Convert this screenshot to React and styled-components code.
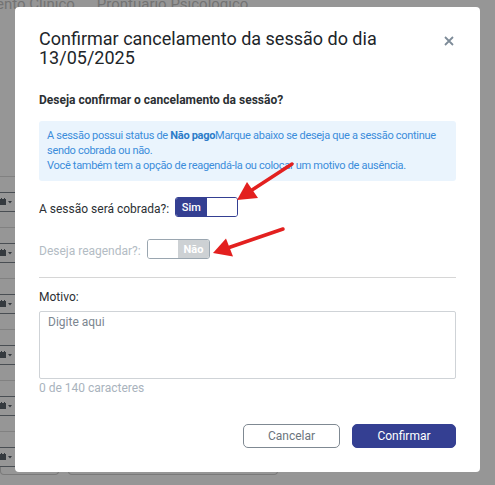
import React, { useState } from "react";
import styled, { createGlobalStyle } from "styled-components";

const Global = createGlobalStyle`
  html, body { margin: 0; padding: 0; }
  body {
    width: 495px;
    height: 485px;
    overflow: hidden;
    background: #ffffff;
    font-family: Roboto, "Liberation Sans", sans-serif;
  }
  * { box-sizing: border-box; }
`;

// ---- page behind the modal ----
const Page = styled.div`
  position: relative;
  width: 495px;
  height: 485px;
  overflow: hidden;
`;

const Tabs = styled.div`
  display: flex;
  gap: 22px;
  height: 13px;
  margin-top: -5px;
  margin-left: -60px;
  font-size: 15px;
  line-height: 18px;
  color: #c4c4c4;
  white-space: nowrap;
`;

const Rows = styled.div`
  margin-top: 168px;
  margin-left: -40px;
  width: 60px;
`;

const Row = styled.div`
  height: ${(p) => (p.last ? 36 : 51)}px;
  display: flex;
  flex-direction: column;
  justify-content: ${(p) => (p.last ? "flex-end" : "center")};
  border-top: 1px solid #dcdcdc;
`;

const Control = styled.div`
  height: 20px;
  border-top: 1px solid #7d858d;
  border-bottom: 1px solid #7d858d;
  display: flex;
  align-items: center;
  padding-left: 40px;
  color: #717a83;
`;

const Footer = styled.div`
  display: flex;
  gap: 9px;
`;

const FooterBox = styled.div`
  height: 8px;
  width: ${(p) => p.w}px;
  border: 1px solid #cfcfcf;
  border-top: none;
  border-radius: 0 0 4px 4px;
`;

// ---- overlay + modal ----
const Backdrop = styled.div`
  position: absolute;
  inset: 0;
  background: rgba(0, 0, 0, 0.41);
`;

const Modal = styled.div`
  position: absolute;
  left: 15px;
  top: 7px;
  width: 465px;
  height: 465px;
  background: #fff;
  border-radius: 4px;
  padding: 22px 24px 24px;
  display: flex;
  flex-direction: column;
`;

const Header = styled.div`
  display: flex;
  justify-content: space-between;
  align-items: flex-start;
`;

const Title = styled.h2`
  margin: 0;
  font-size: 18px;
  font-weight: 400;
  line-height: 19px;
  color: #212529;
  width: 360px;
`;

const Close = styled.button`
  border: none;
  background: none;
  padding: 0;
  margin: 7px 2px 0 0;
  width: 10px;
  height: 10px;
  display: flex;
  cursor: pointer;
`;

const Question = styled.p`
  margin: 26px 0 0;
  font-size: 12px;
  line-height: 14px;
  font-weight: 700;
  color: #2b2f33;
`;

const Info = styled.div`
  margin-top: 14px;
  background: #eaf4fd;
  border-radius: 3px;
  padding: 7px 3px 8px 8px;
  font-size: 11px;
  line-height: 15px;
  letter-spacing: -0.3px;
  color: #3b8ddb;
  b { font-weight: 700; color: #2c7cc9; }
`;

const ToggleRow = styled.div`
  display: flex;
  align-items: flex-end;
  gap: 6px;
  margin-top: ${(p) => p.mt}px;
`;

const Label = styled.span`
  font-size: 12px;
  line-height: 15px;
  color: ${(p) => (p.muted ? "#b3bcc4" : "#2b2f33")};
`;

const Toggle = styled.div`
  display: flex;
  width: 63px;
  height: 20px;
  border: 1px solid ${(p) => (p.on ? "#343f92" : "#9aa6b0")};
  border-radius: 3px;
  overflow: hidden;
  cursor: pointer;
`;

const Segment = styled.span`
  flex: 1;
  display: flex;
  align-items: center;
  justify-content: center;
  font-size: 11px;
  font-weight: ${(p) => (p.on ? 500 : 700)};
  color: #fff;
  background: ${(p) => p.bg || "#fff"};
`;

const Divider = styled.hr`
  border: none;
  border-top: 1px solid #d6d6d6;
  margin: 18px 0 0;
`;

const FieldLabel = styled.label`
  margin-top: 12px;
  font-size: 12px;
  line-height: 15px;
  color: #2b2f33;
`;

const TextArea = styled.textarea`
  margin-top: 6px;
  height: 68px;
  width: 100%;
  resize: none;
  border: 1px solid #cfd3d7;
  border-radius: 2px;
  padding: 3px 8px;
  font-family: Roboto, "Liberation Sans", sans-serif;
  font-size: 12px;
  line-height: 15px;
  outline: none;
  &::placeholder { color: #7c8690; }
`;

const Counter = styled.span`
  margin-top: 2px;
  font-size: 12px;
  line-height: 14px;
  color: #a9b3bd;
`;

const Actions = styled.div`
  margin-top: auto;
  display: flex;
  justify-content: flex-end;
  gap: 12px;
`;

const Button = styled.button`
  height: 24px;
  width: ${(p) => p.w}px;
  border-radius: 5px;
  font-family: Roboto, "Liberation Sans", sans-serif;
  font-size: 12px;
  cursor: pointer;
  border: 1px solid ${(p) => (p.primary ? "#343f92" : "#7f8992")};
  background: ${(p) => (p.primary ? "#343f92" : "#fff")};
  color: ${(p) => (p.primary ? "#fff" : "#6c757d")};
`;

const Arrows = styled.svg`
  position: absolute;
  left: 0;
  top: 0;
  pointer-events: none;
`;

function CalendarIcon() {
  return (
    <svg width="13" height="8" viewBox="0 0 13 8">
      <rect x="0" y="1" width="6" height="6" fill="#5a636c" />
      <rect x="1" y="0" width="1" height="2" fill="#5a636c" />
      <rect x="4" y="0" width="1" height="2" fill="#5a636c" />
      <path d="M8 3 L12 3 L10 5.5 Z" fill="#5a636c" />
    </svg>
  );
}

function YesNo({ on, onToggle }) {
  return (
    <Toggle on={on} onClick={onToggle}>
      {on ? (
        <>
          <Segment on bg="#343f92">Sim</Segment>
          <Segment />
        </>
      ) : (
        <>
          <Segment />
          <Segment bg="#cdd1d4">Não</Segment>
        </>
      )}
    </Toggle>
  );
}

export default function App() {
  const [charge, setCharge] = useState(true);
  const [reschedule, setReschedule] = useState(false);
  const [reason, setReason] = useState("");

  return (
    <>
      <Global />
      <Page>
        <Tabs>
          <span>Atendimento Clínico</span>
          <span>Prontuário Psicológico</span>
        </Tabs>
        <Rows>
          {[0, 1, 2, 3, 4, 5].map((i) => (
            <Row key={i} last={i === 5}>
              <Control>
                <CalendarIcon />
              </Control>
            </Row>
          ))}
        </Rows>
        <Footer>
          <FooterBox w={59} />
          <FooterBox w={210} />
        </Footer>

        <Backdrop />

        <Modal>
          <Header>
            <Title>Confirmar cancelamento da sessão do dia 13/05/2025</Title>
            <Close aria-label="Fechar">
              <svg width="10" height="10" viewBox="0 0 10 10">
                <path d="M1 1 L9 9 M9 1 L1 9" stroke="#7d8b98" strokeWidth="1.8" />
              </svg>
            </Close>
          </Header>

          <Question>Deseja confirmar o cancelamento da sessão?</Question>

          <Info>
            A sessão possui status de <b>Não pago</b>Marque abaixo se deseja que a sessão continue sendo
            cobrada ou não.
            <br />
            Você também tem a opção de reagendá-la ou colocar um motivo de ausência.
          </Info>

          <ToggleRow mt={16}>
            <Label>A sessão será cobrada?:</Label>
            <YesNo on={charge} onToggle={() => setCharge(!charge)} />
          </ToggleRow>

          <ToggleRow mt={22}>
            <Label muted>Deseja reagendar?:</Label>
            <YesNo on={reschedule} onToggle={() => setReschedule(!reschedule)} />
          </ToggleRow>

          <Divider />

          <FieldLabel>Motivo:</FieldLabel>
          <TextArea
            placeholder="Digite aqui"
            maxLength={140}
            value={reason}
            onChange={(e) => setReason(e.target.value)}
          />
          <Counter>{reason.length} de 140 caracteres</Counter>

          <Actions>
            <Button w={97}>Cancelar</Button>
            <Button w={104} primary>
              Confirmar
            </Button>
          </Actions>
        </Modal>

        <Arrows width="495" height="485" viewBox="0 0 495 485">
          <g fill="#e3201f" stroke="#e3201f">
            <line x1="292" y1="164" x2="252" y2="190" strokeWidth="3.5" strokeLinecap="round" />
            <polygon points="237,200 258,198 247,182" stroke="none" />
            <line x1="283" y1="229" x2="229" y2="247.5" strokeWidth="3.5" strokeLinecap="round" />
            <polygon points="213,253 233,256.5 226,238.5" stroke="none" />
          </g>
        </Arrows>
      </Page>
    </>
  );
}
